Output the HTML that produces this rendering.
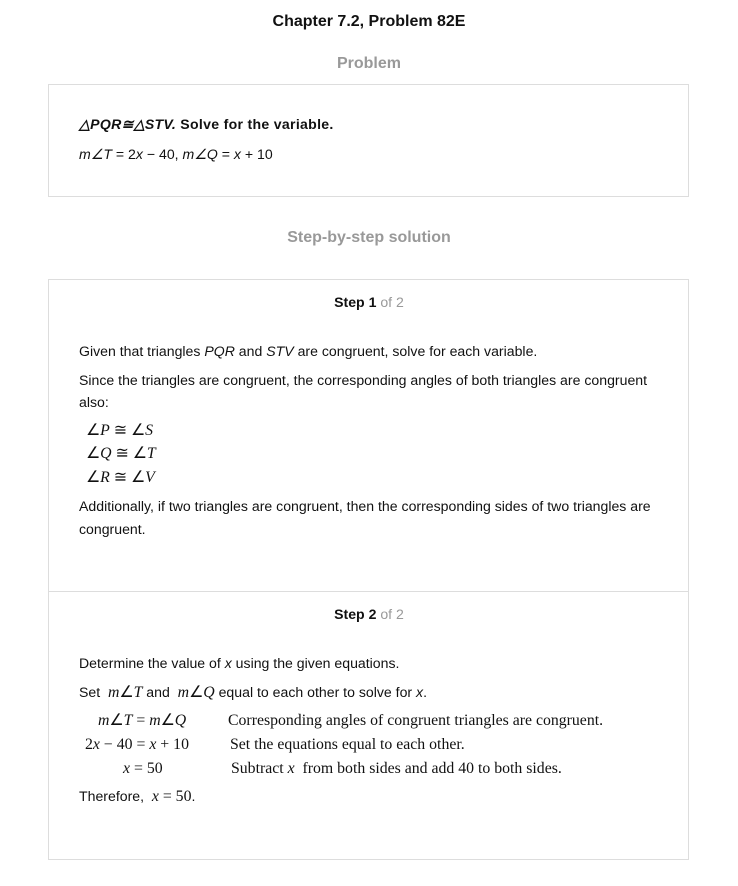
<!DOCTYPE html>
<html><head><meta charset="utf-8"><style>
body{margin:0;width:738px;height:886px;background:#fff;font-family:"Liberation Sans",Arial,sans-serif;color:#111;position:relative;overflow:hidden}
.a{position:absolute;white-space:nowrap;font-size:14.1px;line-height:16px}
.c{left:0;width:738px;text-align:center}
.box{position:absolute;border:1px solid #ddd;left:48px;width:639px}
.sr{font-family:"Liberation Serif","Times New Roman",serif;font-size:15.8px}
.g{color:#999}
</style></head><body>
<div class="a c" style="top:13px;font-size:16px;font-weight:bold;line-height:18px">Chapter 7.2, Problem 82E</div>
<div class="a c g" style="top:55px;font-size:16px;font-weight:bold;line-height:18px">Problem</div>
<div class="box" style="top:84px;height:111px"></div>
<div class="a" style="left:79px;top:116px;font-weight:bold;letter-spacing:0.3px"><i>△PQR≅△STV.</i> Solve for the variable.</div>
<div class="a" style="left:79px;top:146px"><i>m∠T</i> = 2<i>x</i> − 40, <i>m∠Q</i> = <i>x</i> + 10</div>
<div class="a c g" style="top:229px;font-size:16px;font-weight:bold;line-height:18px">Step-by-step solution</div>
<div class="box" style="top:279px;height:579px"></div>
<div style="position:absolute;left:49px;width:639px;top:591px;border-top:1px solid #ddd"></div>
<div class="a c" style="top:294px"><b>Step 1</b> <span class="g">of 2</span></div>
<div class="a" style="left:79px;top:343px">Given that triangles <i>PQR</i> and <i>STV</i> are congruent, solve for each variable.</div>
<div class="a" style="left:79px;top:372px">Since the triangles are congruent, the corresponding angles of both triangles are congruent</div>
<div class="a" style="left:79px;top:394px">also:</div>
<div class="a sr" style="left:86px;top:423px">∠<i>P</i> ≅ ∠<i>S</i></div>
<div class="a sr" style="left:86px;top:446px">∠<i>Q</i> ≅ ∠<i>T</i></div>
<div class="a sr" style="left:86px;top:470px">∠<i>R</i> ≅ ∠<i>V</i></div>
<div class="a" style="left:79px;top:498px">Additionally, if two triangles are congruent, then the corresponding sides of two triangles are</div>
<div class="a" style="left:79px;top:521px">congruent.</div>
<div class="a c" style="top:606px"><b>Step 2</b> <span class="g">of 2</span></div>
<div class="a" style="left:79px;top:655px">Determine the value of <i>x</i> using the given equations.</div>
<div class="a" style="left:79px;top:684px">Set &nbsp;<span class="sr"><i>m</i>∠<i>T</i></span> and &nbsp;<span class="sr"><i>m</i>∠<i>Q</i></span> equal to each other to solve for <i>x</i>.</div>
<div class="a sr" style="left:98px;top:713px"><i>m</i>∠<i>T</i> = <i>m</i>∠<i>Q</i></div>
<div class="a sr" style="left:85px;top:737px">2<i>x</i> − 40 = <i>x</i> + 10</div>
<div class="a sr" style="left:123px;top:761px"><i>x</i> = 50</div>
<div class="a sr" style="left:228px;top:713px">Corresponding angles of congruent triangles are congruent.</div>
<div class="a sr" style="left:230px;top:737px">Set the equations equal to each other.</div>
<div class="a sr" style="left:231px;top:761px">Subtract <i>x</i> &nbsp;from both sides and add 40 to both sides.</div>
<div class="a" style="left:79px;top:788px">Therefore, &nbsp;<span class="sr"><i>x</i> = 50</span>.</div>
</body></html>
